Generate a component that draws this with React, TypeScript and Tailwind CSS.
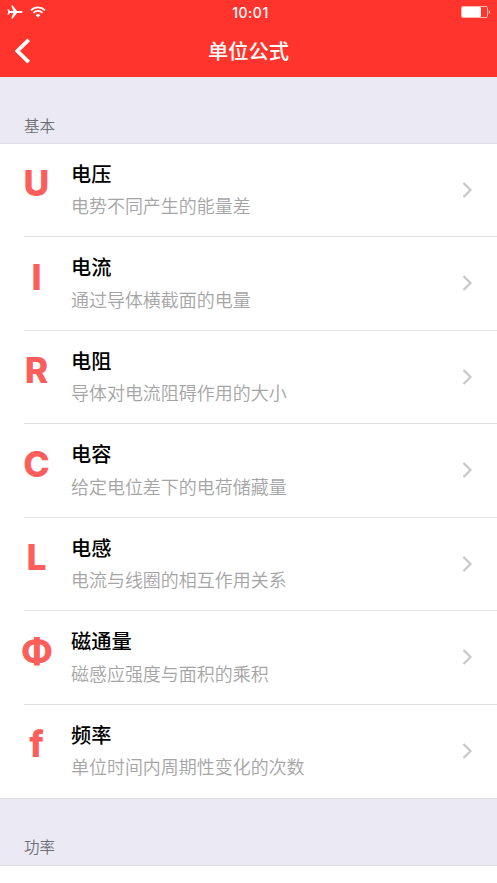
const rows = [
  { symbol: 'U', title: '电压', detail: '电势不同产生的能量差' },
  { symbol: 'I', title: '电流', detail: '通过导体横截面的电量' },
  { symbol: 'R', title: '电阻', detail: '导体对电流阻碍作用的大小' },
  { symbol: 'C', title: '电容', detail: '给定电位差下的电荷储藏量' },
  { symbol: 'L', title: '电感', detail: '电流与线圈的相互作用关系' },
  { symbol: 'Φ', title: '磁通量', detail: '磁感应强度与面积的乘积' },
  { symbol: 'f', title: '频率', detail: '单位时间内周期性变化的次数' },
];

function StatusBar() {
  return (
    <div className="grid h-6 grid-cols-3 items-center pr-[6px] pl-[7px]">
      <div className="flex items-center gap-[7px]">
        <svg width="16" height="14" viewBox="0 0 16 14" fill="#fff">
          <path d="M15.6 7c0-.6-.7-.9-1.5-.9H10L5.7.4H4.3l2 5.700H3L1.500 4.300H.5L1.200 7 .5 9.700h1L3 7.900h3.300l-2 5.700h1.400L10 7.900h4.100c.8 0 1.500-.3 1.500-.9z" />
        </svg>
        <svg width="16" height="12" viewBox="0 0 16 12" fill="none" stroke="#fff" strokeWidth="1.7">
          <path d="M1 4.300a10 10 0 0 1 14 0" />
          <path d="M3.400 6.800a6.500 6.500 0 0 1 9.200 0" />
          <path d="M8 11.500 5.700 9.200a3.300 3.300 0 0 1 4.600 0z" fill="#fff" stroke="none" />
        </svg>
      </div>
      <span className="pt-[2px] pl-[3px] text-center font-['Inter'] text-[14px] leading-none font-medium tracking-[0.5px] whitespace-nowrap">10:01</span>
      <svg className="justify-self-end" width="30" height="12" viewBox="0 0 30 12">
        <rect x=".5" y=".5" width="26" height="11" rx="1.500" fill="none" stroke="#fff" strokeOpacity=".65" />
        <rect x="1" y="1" width="19" height="10" rx="1" fill="#fff" />
        <path d="M27.800 4.200a1.900 1.900 0 0 1 0 3.600z" fill="#fff" fillOpacity=".8" />
      </svg>
    </div>
  );
}

export default function App() {
  return (
    <div className="flex h-[883px] w-full flex-col overflow-hidden bg-white font-['Noto_Sans_CJK_SC',sans-serif]">
      <header className="h-[77px] shrink-0 bg-[#ff352d] text-white">
        <StatusBar />
        <div className="grid h-[53px] grid-cols-3 items-center">
          <svg className="ml-[14px]" width="18" height="26" viewBox="0 0 18 26" fill="none" stroke="#fff" strokeWidth="3.800">
            <path d="M14.700 1.800 3.400 13l11.300 11.200" />
          </svg>
          <h1 className="text-center text-[20.300px] leading-[53px] font-medium">单位公式</h1>
        </div>
      </header>
      <h2 className="flex h-[66.500px] shrink-0 items-end border-b border-[#dfdee5] bg-[#ebeaf4] pb-[6px] pl-6 text-[15.500px] leading-[23px] font-[350] text-[#6d6d74]">
        基本
      </h2>
      <ul className="shrink-0">
        {rows.map((row) => (
          <li key={row.title} className="group h-[93.500px] pl-6">
            <div className="flex h-full border-b border-[#e1e1e3] group-last:border-transparent">
              <span className="-ml-1 w-8 shrink-0 pt-[21.500px] pl-px text-center font-['Inter'] text-[35.500px] leading-[38px] font-extrabold text-[#fc5f5b]">
                {row.symbol}
              </span>
              <div className="flex flex-1 items-center justify-between pr-[24px] pl-[19px]">
                <div className="h-full pt-[15px]">
                  <h3 className="text-[20.200px] leading-[30px] font-medium text-black">{row.title}</h3>
                  <p className="pt-[3.500px] text-[17.980px] leading-[27px] font-[350] text-[#a5a5a5]">{row.detail}</p>
                </div>
                <svg width="11" height="16" viewBox="0 0 11 16" fill="none" stroke="#c7c7cc" strokeWidth="2.200">
                  <path d="m1.500 1 7 7-7 7" />
                </svg>
              </div>
            </div>
          </li>
        ))}
      </ul>
      <h2 className="-mt-[0.500px] flex h-[68px] shrink-0 items-end border-y border-[#dfdee5] bg-[#ebeaf4] pb-[6.500px] pl-6 text-[15.500px] leading-[23px] font-[350] text-[#6d6d74]">
        功率
      </h2>
    </div>
  );
}
